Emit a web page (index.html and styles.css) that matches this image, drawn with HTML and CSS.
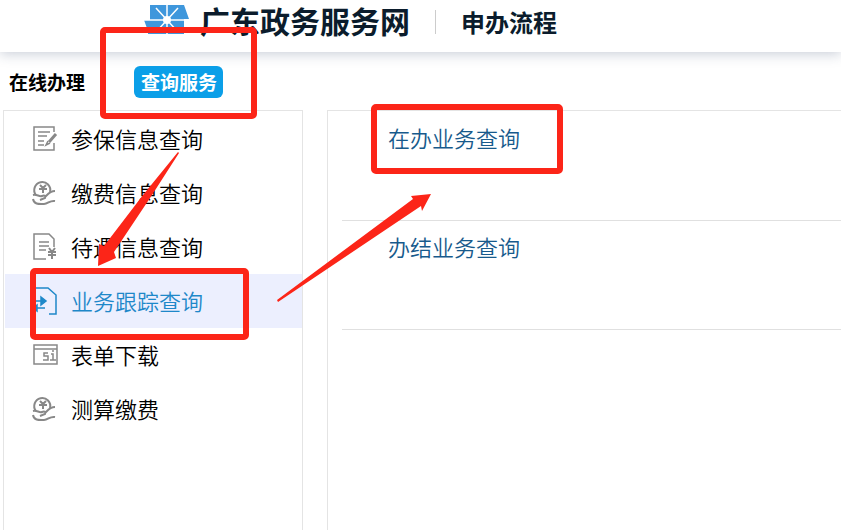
FILE: index.html
```
<!DOCTYPE html>
<html lang="zh-CN">
	<head>
		<meta charset="utf-8">
		<meta name="viewport" content="width=device-width, initial-scale=1">
		<link rel="stylesheet" href="styles.css">
		<title>广东政务服务网</title>
	</head>
	<body>
		<header class="header">
			<svg class="logo" viewBox="0 0 46 30">
				<path fill="#3f97dc" d="M6 0H40L45 14H40V29H4V26L0 15H6Z"/>
				<path stroke="#fff" stroke-width="1.5" d="M0 15H46M23 0V30M12 3L34 27M34 3L12 27"/>
				<circle cx="23" cy="15" r="4" fill="#fff"/>
			</svg>
			<h1 class="site">广东政务服务网</h1>
			<h2 class="sub">申办流程</h2>
		</header>
		<nav class="tabs">
			<a class="tab" href="#">在线办理</a>
			<a class="tab tab-on" href="#">查询服务</a>
		</nav>
		<div class="content">
			<nav class="side">
				<a class="item" href="#">
					<svg class="icon" viewBox="0 0 28 28"><path d="M24 7V2H4V25H24V18M8 7H20M8 11H17M8 16H14M8 20H14"/><path stroke-width="3" d="M26 9L19 17"/><path d="M18 16L16 20L20 18"/></svg>
					<span class="name">参保信息查询</span>
				</a>
				<a class="item" href="#">
					<svg class="icon" viewBox="0 0 28 28"><use href="#hand"/></svg>
					<span class="name">缴费信息查询</span>
				</a>
				<a class="item" href="#">
					<svg class="icon" viewBox="0 0 28 28"><path d="M16 26H4V1H19L24 6V14M9 9H19M9 13H19M9 17H16"/><path stroke-width="2" d="M19 15L22 19L25 15M22 19V26M18 19H26M18 22H26"/></svg>
					<span class="name">待遇信息查询</span>
				</a>
				<a class="item item-on" href="#">
					<svg class="icon" viewBox="0 0 28 28"><path d="M5 11V1H18L26 8V27H19M3 14H14M5 21H15"/><path fill="currentColor" d="M11 10L16 14L11 18ZM7 18L3 21L7 24Z"/></svg>
					<span class="name">业务跟踪查询</span>
				</a>
				<a class="item" href="#">
					<svg class="icon" viewBox="0 0 28 28"><path d="M4 4H27V23H4ZM4 8H27"/><path d="M18 12H14V15H18V19H13M21 13H23V19M20 19H26M23 9V11"/></svg>
					<span class="name">表单下载</span>
				</a>
				<a class="item" href="#">
					<svg class="icon" viewBox="0 0 28 28"><use href="#hand"/></svg>
					<span class="name">测算缴费</span>
				</a>
			</nav>
			<main class="main">
				<div class="row"><a class="link" href="#">在办业务查询</a></div>
				<div class="row"><a class="link" href="#">办结业务查询</a></div>
			</main>
		</div>

		<!-- red marks over the page -->
		<svg class="marks" width="841" height="530" viewBox="0 0 841 530">
			<rect x="103" y="30" width="151" height="86" rx="2"/>
			<rect x="33" y="271" width="213" height="66" rx="2"/>
			<rect x="374" y="107" width="186" height="64" rx="2"/>
			<path d="M179 153L152 195L114 252L116 258L98 266L99 244L104 246L143 195L178 152Z"/>
			<path d="M277 300L413 199L411 196L431 194L422 211L421 206L278 302Z"/>
		</svg>

		<svg class="defs" width="0" height="0">
			<defs>
				<g id="hand" stroke-width="2">
					<path d="M6 16A8 8 0 1 1 20 13"/>
					<path d="M10 6L13 9L16 6M13 9V14M9 10H17"/>
					<path d="M3 16C7 15 9 18 12 17C15 16 16 17 15 19L10 21M15 18C18 15 20 12 25 12M3 20C4 26 10 25 14 25C18 25 20 21 25 22"/>
				</g>
			</defs>
		</svg>
	</body>
</html>
```
FILE: styles.css
```
body{
	margin:0;
	min-height:100vh;
	display:flex;
	flex-direction:column;
	background:#fff;
	color:#000;
	font-family:"Noto Sans CJK SC", sans-serif;
}
a{
	color:inherit;
	text-decoration:none;
}
.header{
	display:flex;
	align-items:center;
	height:52px;
	padding-left:144px;
	box-sizing:border-box;
	color:#0b1c2c;
	box-shadow:0 2px 12px rgba(40,60,100,0.25);
}
.logo{
	width:46px;
	height:30px;
	margin-bottom:12px;
}
.site{
	margin:0 0 12px 10px;
	font-size:30px;
	line-height:40px;
}
.sub{
	margin:0 0 8px 25px;
	padding-left:25px;
	border-left:1px solid #ccc;
	font-size:24px;
	line-height:24px;
}
.tabs{
	display:flex;
	align-items:center;
	gap:49px;
	height:58px;
	padding:1px 0 0 9px;
	box-sizing:border-box;
	font-size:19px;
	font-weight:bold;
	line-height:32px;
}
.tab-on{
	padding:0 6px 0 7px;
	border-radius:6px;
	background:#0b9fe8;
	color:#fff;
}
.content{
	flex:1;
	display:flex;
	gap:24px;
	padding-left:3px;
}
.side{
	width:36%;
	max-width:300px;
	box-sizing:border-box;
	padding:1px 0 0 1px;
	border:1px solid #e4e4e4;
	border-bottom:0;
}
.item{
	display:flex;
	align-items:center;
	gap:13px;
	height:54px;
	padding-left:25px;
	font-size:22px;
	font-weight:350;
}
.item-on{
	background:#eceffe;
	color:#1e88c9;
}
.name{
	padding-bottom:3px;
}
.icon{
	width:28px;
	height:28px;
	fill:none;
	stroke:#888;
	stroke-width:1.5;
}
.item-on .icon{
	stroke:#1e88c9;
}
.main{
	flex:1;
	padding:1px 0 0 14px;
	border-top:1px solid #e4e4e4;
	border-left:1px solid #e4e4e4;
}
.row{
	height:109px;
	box-sizing:border-box;
	padding:10px 0 0 46px;
	border-bottom:1px solid #e0e0e0;
}
.link{
	color:#175a8c;
	font-size:22px;
	font-weight:350;
	line-height:30px;
}
.marks{
	position:absolute;
	top:0;
	left:0;
	pointer-events:none;
	fill:#fc2518;
}
.marks rect{
	fill:none;
	stroke:#fc2518;
	stroke-width:6;
}
.defs{
	position:absolute;
}
```
